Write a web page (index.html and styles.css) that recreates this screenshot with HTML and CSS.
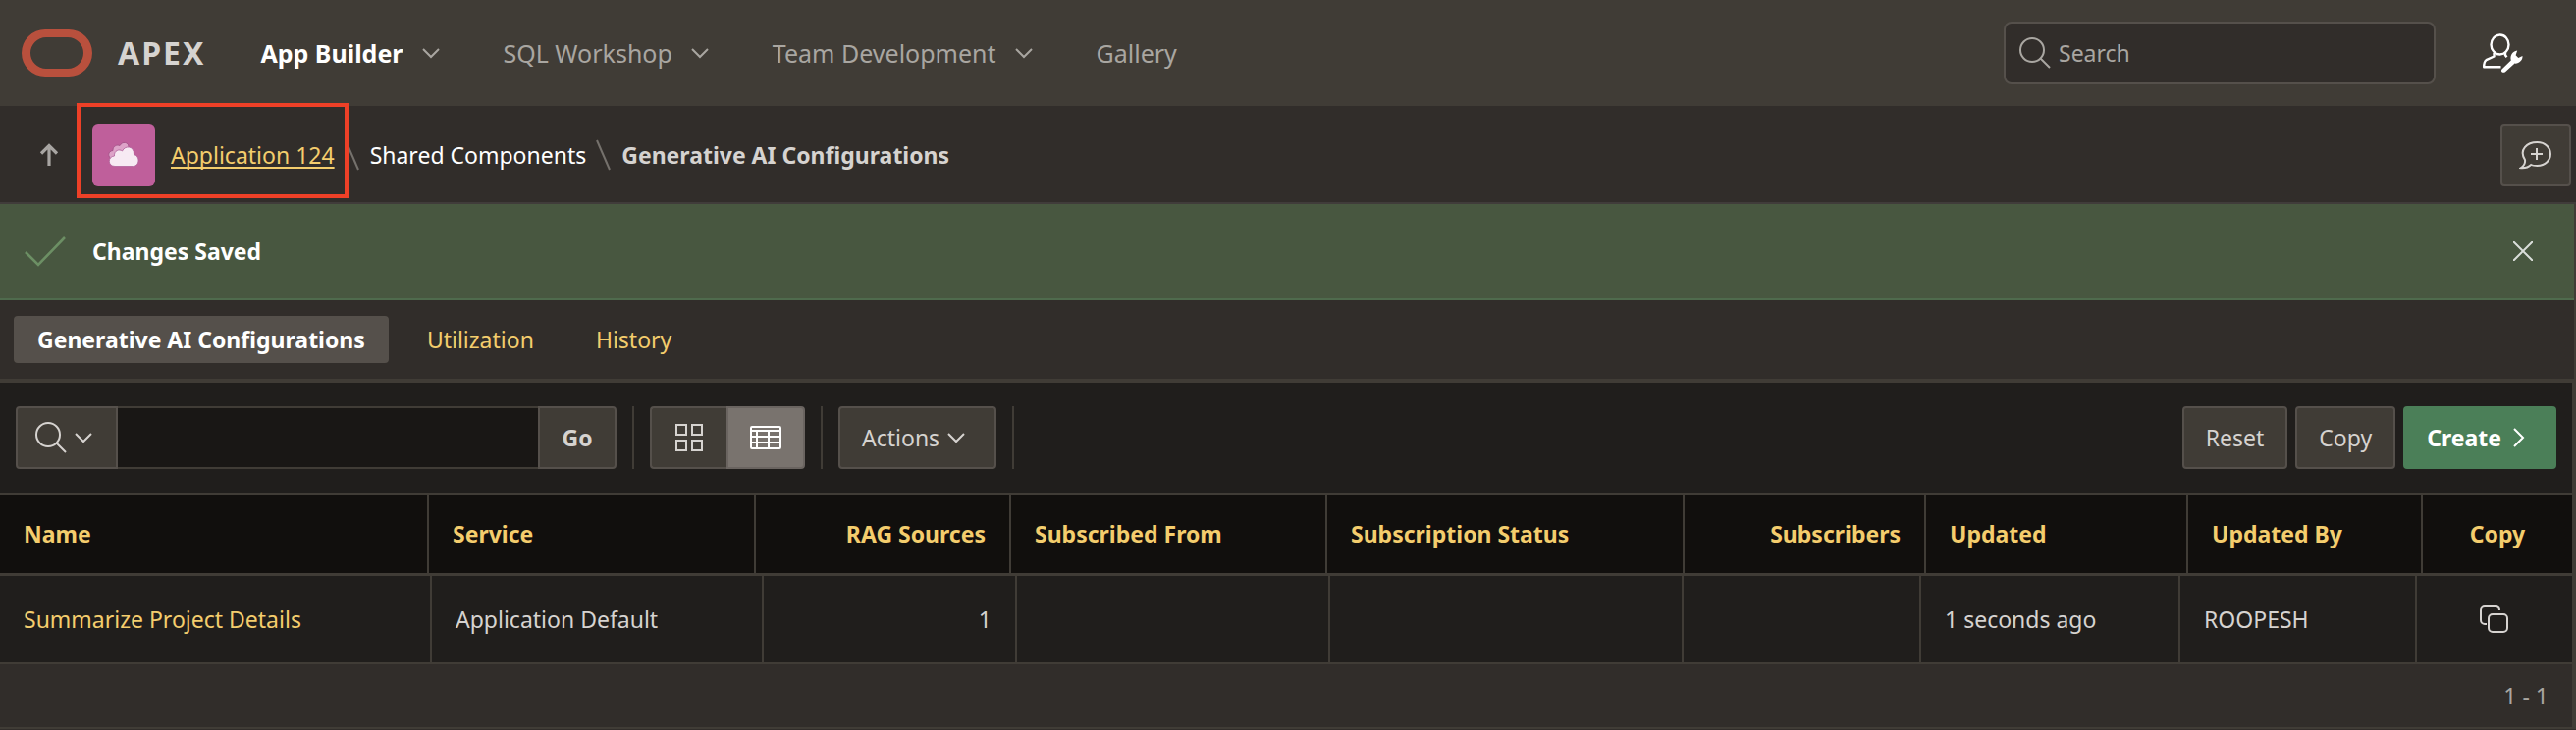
FILE: index.html
```html
<!DOCTYPE html>
<html lang="en">
<head>
<meta charset="utf-8">
<title>Generative AI Configurations</title>
<link rel="stylesheet" href="styles.css">
</head>
<body>
<svg class="defs" aria-hidden="true">
  <symbol id="chevron" viewBox="0 0 18 12"><path d="M1 2 9 10 17 2" fill="none" stroke="currentColor" stroke-width="2"/></symbol>
  <symbol id="magnifier" viewBox="0 0 32 32"><g fill="none" stroke="currentColor" stroke-width="2"><circle cx="13" cy="13" r="12"/><path d="M21.5 21.5 31 31"/></g></symbol>
</svg>

<header class="header">
  <a class="brand" href="#" aria-label="Oracle APEX">
    <svg class="brand-mark" width="72" height="48" viewBox="0 0 72 48" aria-hidden="true"><path fill="#b9503d" fill-rule="evenodd" d="M24 0H48a24 24 0 0 1 0 48H24A24 24 0 0 1 24 0ZM25 8a16 16 0 0 0 0 32H47a16 16 0 0 0 0-32Z"/></svg>
    <span class="brand-name">APEX</span>
  </a>
  <nav class="menu" aria-label="Main">
    <a class="menu-item menu-item-current" href="#">App Builder<svg class="chevron" aria-hidden="true"><use href="#chevron"/></svg></a>
    <a class="menu-item" href="#">SQL Workshop<svg class="chevron" aria-hidden="true"><use href="#chevron"/></svg></a>
    <a class="menu-item" href="#">Team Development<svg class="chevron" aria-hidden="true"><use href="#chevron"/></svg></a>
    <a class="menu-item" href="#">Gallery</a>
  </nav>
  <label class="search">
    <svg class="magnifier" aria-hidden="true"><use href="#magnifier"/></svg>
    <input class="search-input" type="search" placeholder="Search" aria-label="Search">
  </label>
  <button class="admin" type="button" aria-label="Administration">
    <svg width="44" height="44" viewBox="0 0 44 44" aria-hidden="true">
      <g fill="none" stroke="#fff" stroke-width="2.4" stroke-linejoin="round">
        <ellipse cx="18.500" cy="13.500" rx="9" ry="10"/>
        <path d="M12.500 22v3.500L4.500 29.200C2.500 30.500 2.200 32.500 2.200 36.300H19.500"/>
        <path d="M24 22v2.200l1.500 2"/>
      </g>
      <path d="M20.500 38.500 29.800 29.400C28.600 25 31 20.400 36.200 19.600L34.600 24.300 37.300 27 41.500 25C41.800 29.200 38 33 33.600 32.600L24 41.200C21.500 42.800 18.800 40.800 20.500 38.500Z" fill="#fff"/>
    </svg>
  </button>
</header>

<div class="crumbs">
  <a class="crumb-up" href="#" aria-label="Up"><svg width="20" height="24" viewBox="0 0 20 24" aria-hidden="true"><path d="M10 23V3M2 10.500 10 2.500 18 10.500" fill="none" stroke="#a8a5a2" stroke-width="3.200"/></svg></a>
  <nav class="crumb-list" aria-label="Breadcrumb">
    <a class="crumb-app" href="#">
      <span class="app-icon">
        <svg width="34" height="30" viewBox="0 0 34 30" aria-hidden="true">
          <path d="M5 19.500C.500 17 .500 11 6 10.500 5.500 6 10.500 4 13 5.500 15.500 .500 22 2 22 6.500L24 12 10 20Z" fill="#dda3c8" stroke="#a8568c"/>
          <path d="M8 26.500C.500 26.500 .500 16.500 7.500 16 7 10.500 12.500 8.500 15.500 11 18.500 4.500 28 6 27.500 14.500 34 16 33.500 26.500 26.500 26.500Z" fill="#f7eaf3" stroke="#b0629a" stroke-width=".8"/>
        </svg>
      </span>
      <span class="crumb-link">Application 124</span>
    </a>
    <svg class="slash" viewBox="0 0 16 32" aria-hidden="true"><path d="M1 1 14 31" stroke="#75716c" stroke-width="2"/></svg>
    <a class="crumb" href="#">Shared Components</a>
    <svg class="slash" viewBox="0 0 16 32" aria-hidden="true"><path d="M1 1 14 31" stroke="#75716c" stroke-width="2"/></svg>
    <span class="crumb-current" aria-current="page">Generative AI Configurations</span>
  </nav>
  <button class="button button-feedback" type="button" aria-label="Add feedback">
    <svg width="34" height="30" viewBox="0 0 34 30" fill="none" stroke="currentColor" stroke-width="2" aria-hidden="true"><path d="M6 20C-.500 9.500 8 2 18.500 2 27 2 32 8 32 14S27 26 18.500 26C16 26 14 26 12.200 25 9.500 27.500 6 28.500 2 28.200 4.500 26.500 6.500 23.500 6 20Z"/><path d="M18 8v12M12 14h12"/></svg>
  </button>
</div>

<main class="main">
  <div class="notice" role="status">
    <svg class="notice-check" viewBox="0 0 44 32" aria-hidden="true"><path d="M2 17 15 30 42 2" fill="none" stroke="#6c8f64" stroke-width="2.600"/></svg>
    <span class="notice-text">Changes Saved</span>
    <button class="notice-close" type="button" aria-label="Close"><svg width="20" height="20" viewBox="0 0 20 20" aria-hidden="true"><path d="M0 0 20 20M20 0 0 20" stroke="#dadeda" stroke-width="2"/></svg></button>
  </div>

  <nav class="tabs" aria-label="Sections">
    <a class="tab tab-current" href="#">Generative AI Configurations</a>
    <a class="tab" href="#">Utilization</a>
    <a class="tab" href="#">History</a>
  </nav>

  <section class="report">
    <div class="toolbar">
      <div class="group">
        <button class="button button-columns" type="button" aria-label="Select columns to search"><svg class="magnifier" aria-hidden="true"><use href="#magnifier"/></svg><svg class="chevron" aria-hidden="true"><use href="#chevron"/></svg></button>
        <input class="report-input" type="text" aria-label="Search report">
        <button class="button button-go" type="button">Go</button>
      </div>
      <span class="divider"></span>
      <div class="group">
        <button class="button button-view" type="button" aria-label="View icons"><svg width="30" height="28" viewBox="0 0 30 28" fill="none" stroke="currentColor" stroke-width="2" aria-hidden="true"><path d="M2 1h10v10H2ZM18 1h10v10H18ZM2 17h10v10H2ZM18 17h10v10H18Z"/></svg></button>
        <button class="button button-view button-pressed" type="button" aria-label="View report" aria-pressed="true"><svg width="32" height="24" viewBox="0 0 32 24" fill="none" stroke="currentColor" stroke-width="2" aria-hidden="true"><rect x="1" y="1" width="30" height="22" rx="1"/><path d="M1 5h30M1 11h30M1 17h30M7 5v18M19 5v18"/></svg></button>
      </div>
      <span class="divider"></span>
      <button class="button button-actions" type="button">Actions<svg class="chevron" aria-hidden="true"><use href="#chevron"/></svg></button>
      <span class="divider"></span>
      <div class="toolbar-end">
        <button class="button" type="button">Reset</button>
        <button class="button" type="button">Copy</button>
        <button class="button button-create" type="button">Create<svg width="12" height="20" viewBox="0 0 12 20" aria-hidden="true"><path d="M1 1 10 10 1 19" fill="none" stroke="#fff" stroke-width="2"/></svg></button>
      </div>
    </div>

    <table class="grid grid-head" aria-label="Column headings">
      <colgroup><col class="h-name"><col class="h-service"><col class="h-rag"><col class="h-from"><col class="h-status"><col class="h-subs"><col class="h-updated"><col class="h-by"><col class="h-copy"></colgroup>
      <thead>
        <tr><th>Name</th><th>Service</th><th class="number">RAG Sources</th><th>Subscribed From</th><th>Subscription Status</th><th class="number">Subscribers</th><th>Updated</th><th>Updated By</th><th class="center">Copy</th></tr>
      </thead>
    </table>
    <table class="grid grid-body" aria-label="Generative AI Configurations">
      <colgroup><col class="b-name"><col class="b-service"><col class="b-rag"><col class="b-from"><col class="b-status"><col class="b-subs"><col class="b-updated"><col class="b-by"><col class="b-copy"></colgroup>
      <tbody>
        <tr><td><a class="link" href="#">Summarize Project Details</a></td><td>Application Default</td><td class="number">1</td><td></td><td></td><td></td><td>1 seconds ago</td><td>ROOPESH</td><td class="center"><a class="copy-link" href="#" aria-label="Copy"><svg width="30" height="28" viewBox="0 0 30 28" fill="none" stroke="currentColor" stroke-width="2" aria-hidden="true"><path d="M7 19H5a4 4 0 0 1-4-4V5a4 4 0 0 1 4-4H17a4 4 0 0 1 3 4"/><rect x="9" y="9" width="19" height="18" rx="4"/></svg></a></td></tr>
      </tbody>
    </table>
    <div class="pager">1 - 1</div>
  </section>
</main>
</body>
</html>
```
FILE: styles.css
```css
* {
  box-sizing: border-box;
}

body {
  margin: 0;
  background: #312d2a;
  color: #d6d3d0;
  font-family: "Noto Sans", "Open Sans", sans-serif;
  font-size: 23px;
  line-height: 32px;
}

a {
  color: inherit;
  text-decoration: none;
}

button,
input {
  margin: 0;
  font: inherit;
  color: inherit;
}

svg {
  display: block;
  flex: none;
}

.defs {
  position: absolute;
  width: 0;
  height: 0;
}

.chevron {
  width: 18px;
  height: 12px;
}

.magnifier {
  width: 32px;
  height: 32px;
}

/* Header */

.header {
  display: flex;
  align-items: center;
  height: 108px;
  padding: 0 52px 0 22px;
  background: #403c36;
}

.brand {
  display: flex;
  align-items: center;
  gap: 26px;
  margin-right: 56px;
}

.brand-name {
  font-size: 32px;
  font-weight: 700;
  letter-spacing: 2px;
}

.menu {
  display: flex;
  gap: 65px;
  font-size: 25px;
  color: #a9a6a1;
}

.menu-item {
  display: flex;
  align-items: center;
  gap: 19px;
  white-space: nowrap;
}

.menu-item-current {
  font-weight: 700;
  color: #fff;
}

.menu-item-current .chevron {
  color: #a9a6a1;
}

.search {
  display: flex;
  align-items: center;
  gap: 8px;
  width: 440px;
  height: 64px;
  margin-left: auto;
  padding: 0 14px;
  border: 2px solid #55504b;
  border-radius: 8px;
  background: #312d2a;
  color: #a9a6a1;
}

.search-input {
  flex: 1;
  min-width: 0;
  padding: 0;
  border: 0;
  outline: 0;
  background: none;
}

.search-input::placeholder {
  color: #a9a6a1;
  opacity: 1;
}

.admin {
  margin-left: 47px;
  padding: 0;
  border: 0;
  background: none;
}

/* Breadcrumb */

.crumbs {
  display: flex;
  align-items: center;
  height: 100px;
  padding: 2px 5px 0 40px;
  border-bottom: 2px solid #403c3a;
}

.crumb-list {
  display: flex;
  align-items: center;
  gap: 10px;
  margin-left: 34px;
  white-space: nowrap;
}

.crumb-app {
  position: relative;
  display: flex;
  align-items: center;
  gap: 16px;
  color: #f4cd6d;
}

.crumb-app::after {
  content: "";
  position: absolute;
  z-index: 1;
  inset: -21px -14px -12px -16px;
  border: 4px solid #ee4027;
}

.app-icon {
  display: grid;
  place-items: center;
  width: 64px;
  height: 64px;
  border-radius: 6px;
  background: #bf5f9b;
}

.crumb-link {
  text-decoration: underline;
  text-decoration-thickness: 2px;
  text-underline-offset: 3px;
  text-decoration-skip-ink: none;
}

.crumb {
  color: #fff;
}

.crumb-current {
  font-weight: 700;
}

.slash {
  width: 16px;
  height: 32px;
}

/* Buttons */

.button {
  display: flex;
  align-items: center;
  justify-content: center;
  height: 64px;
  padding: 0 22px;
  border: 2px solid #55504b;
  border-radius: 4px;
  background: #403c36;
  color: #d6d3d0;
}

.button-feedback {
  width: 72px;
  margin-left: auto;
  padding: 0;
}

/* Notice */

.main {
  border-right: 2px solid #403c36;
}

.notice {
  display: flex;
  align-items: center;
  height: 98px;
  padding: 0 42px 0 24px;
  border-bottom: 2px solid #4f6b4d;
  background: #485740;
}

.notice-check {
  width: 44px;
  height: 32px;
}

.notice-text {
  margin-left: 26px;
  font-weight: 700;
  color: #fff;
}

.notice-close {
  margin-left: auto;
  padding: 0;
  border: 0;
  background: none;
}

/* Tabs */

.tabs {
  display: flex;
  align-items: center;
  gap: 15px;
  height: 80px;
  padding: 0 14px;
}

.tab {
  padding: 8px 24px;
  border-radius: 4px;
  color: #f4cd6d;
}

.tab-current {
  background: #55504b;
  font-weight: 700;
  color: #fff;
}

/* Report */

.report {
  border-top: 4px solid #403c36;
  border-right: 2px solid #403c36;
  border-bottom: 2px solid #403c36;
}

.toolbar {
  display: flex;
  align-items: center;
  gap: 16px;
  padding: 24px 16px;
  background: #201e1c;
}

.group {
  display: flex;
}

.group .button:first-child {
  border-radius: 4px 0 0 4px;
}

.group .button:last-child {
  border-radius: 0 4px 4px 0;
}

.button-columns {
  width: 104px;
  gap: 8px;
  padding: 0 6px 0 0;
}

.report-input {
  width: 428px;
  height: 64px;
  padding: 0 16px;
  border: solid #403c36;
  border-width: 2px 0;
  outline: 0;
  background: #191715;
}

.button-go {
  width: 80px;
  font-weight: 700;
}

.button-view {
  width: 78px;
  padding: 0;
  border-right: 0;
}

.button-pressed {
  width: 80px;
  border: 2px solid #6a6460;
  background: #79736e;
  color: #fff;
}

.button-actions {
  gap: 8px;
  padding-right: 30px;
}

.divider {
  width: 2px;
  height: 64px;
  background: #403c36;
}

.toolbar-end {
  display: flex;
  gap: 8px;
  margin-left: auto;
}

.button-create {
  gap: 12px;
  padding-right: 30px;
  border-color: #4b7f58;
  background: #4b7f58;
  font-weight: 700;
  color: #fff;
}

.grid {
  width: 100%;
  table-layout: fixed;
  border-collapse: separate;
  border-spacing: 0;
}

.grid th,
.grid td {
  padding: 0 24px;
  border-right: 2px solid #403c36;
  text-align: left;
  white-space: nowrap;
}

.grid th:last-child,
.grid td:last-child {
  border-right: 0;
}

.grid th {
  height: 85px;
  border-top: 2px solid #403c36;
  border-bottom: 3px solid #403c36;
  background: #110f0d;
  font-weight: 700;
  color: #f4cd6d;
}

.grid td {
  height: 90px;
  border-bottom: 2px solid #403c36;
  background: #201e1c;
}

.grid .number {
  text-align: right;
}

.grid .center {
  text-align: center;
}

.h-name { width: 437px; }
.h-service { width: 333px; }
.h-rag { width: 260px; }
.h-from { width: 322px; }
.h-status { width: 364px; }
.h-subs { width: 246px; }
.h-updated { width: 267px; }
.h-by { width: 239px; }
.h-copy { width: 152px; }

.b-name { width: 440px; }
.b-service { width: 338px; }
.b-rag { width: 258px; }
.b-from { width: 319px; }
.b-status { width: 360px; }
.b-subs { width: 242px; }
.b-updated { width: 264px; }
.b-by { width: 241px; }
.b-copy { width: 158px; }

.link {
  color: #f4cd6d;
}

.copy-link {
  display: flex;
  justify-content: center;
}

.pager {
  padding: 16px 24px;
  text-align: right;
  color: #a9a6a1;
}
```
